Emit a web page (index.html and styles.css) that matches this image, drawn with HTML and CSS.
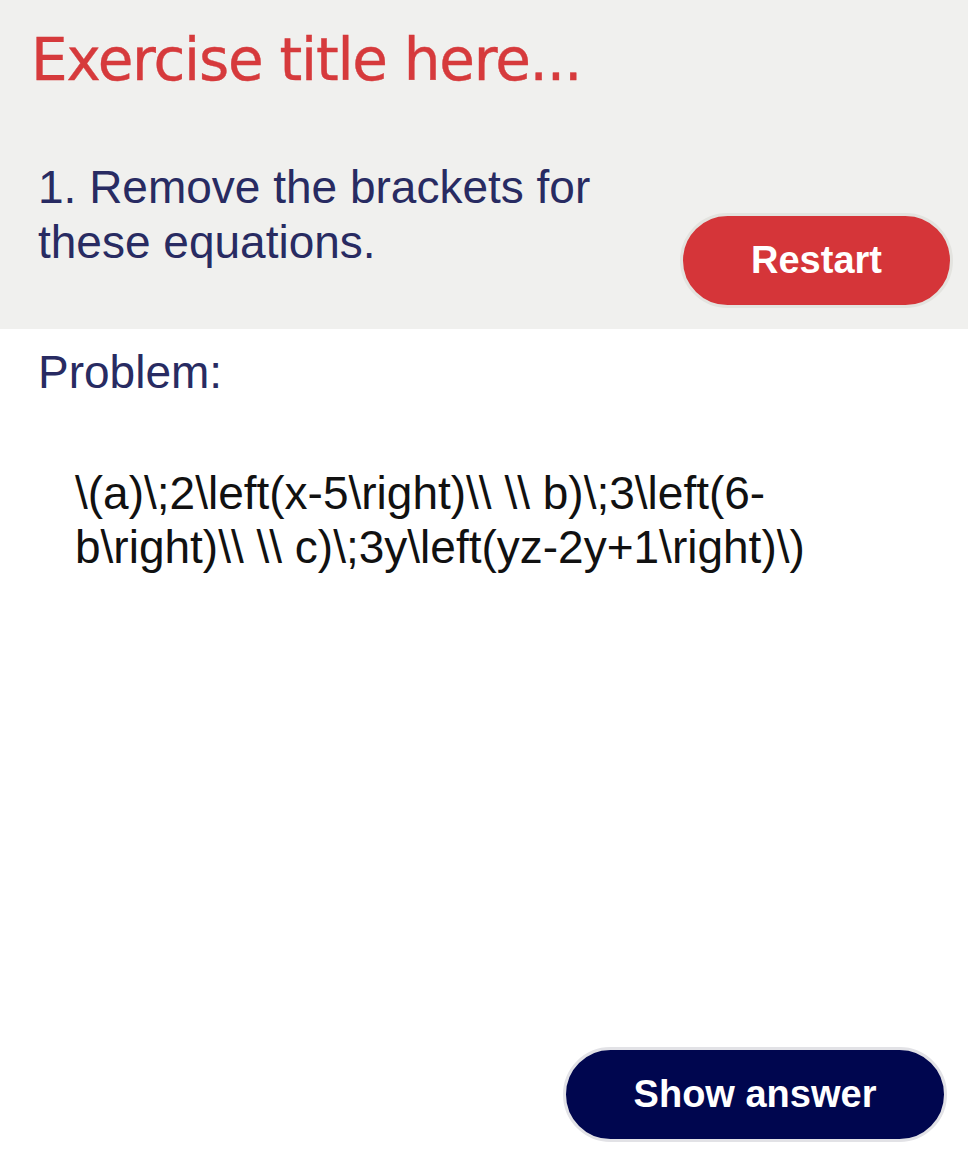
FILE: index.html
```html
<!DOCTYPE html>
<html lang="en">
<head>
<meta charset="utf-8">
<title>Exercise</title>
<link rel="stylesheet" href="styles.css">
</head>
<body>
  <header class="header">
    <h1 class="title">Exercise title here...</h1>
    <div class="question-row">
      <p class="question">1. Remove the brackets for these equations.</p>
      <button class="btn btn-restart" type="button">Restart</button>
    </div>
  </header>
  <main class="main">
    <p class="label">Problem:</p>
    <p class="problem">\(a)\;2\left(x-5\right)\\ \\ b)\;3\left(6-b\right)\\ \\ c)\;3y\left(yz-2y+1\right)\)</p>
    <button class="btn btn-answer" type="button">Show answer</button>
  </main>
</body>
</html>
```

FILE: styles.css
```css
html, body {
  height: 100%;
}
body {
  margin: 0;
  display: flex;
  flex-direction: column;
  background: #ffffff;
  font-family: "Liberation Sans", Arial, sans-serif;
}
.header {
  background: #f0f0ee;
  padding: 25px 15px 21px 0;
}
.title {
  margin: 0;
  padding-left: 31px;
  font-family: "DejaVu Sans", sans-serif;
  font-weight: normal;
  font-size: 58px;
  line-height: 70px;
  color: #d63a3c;
  letter-spacing: -1.25px;
  -webkit-text-stroke: 0.4px #d63a3c;
}
.question-row {
  display: flex;
  align-items: flex-start;
  margin-top: 65px;
}
.question {
  flex: 1;
  margin: 0 0 0 38px;
  font-size: 46px;
  line-height: 55px;
  color: #282b62;
}
.btn {
  font-family: "Liberation Sans", Arial, sans-serif;
  font-weight: bold;
  font-size: 38px;
  color: #ffffff;
  border: 3px solid #e3e3df;
  border-radius: 48px;
  height: 95px;
  padding: 0;
  box-sizing: border-box;
  cursor: pointer;
}
.btn-restart {
  width: 273px;
  margin-top: 53px;
  background: #d53539;
}
.main {
  flex: 1;
  display: flex;
  flex-direction: column;
  padding: 16px 21px 18px 0;
}
.label {
  margin: 0 0 0 38px;
  font-size: 46px;
  line-height: 55px;
  color: #282b62;
}
.problem {
  margin: 66px 54px 0 75px;
  font-size: 46px;
  line-height: 54px;
  color: #111111;
}
.btn-answer {
  margin-top: auto;
  align-self: flex-end;
  width: 384px;
  background: #00064f;
  border-color: #e2e2e6;
}
```
